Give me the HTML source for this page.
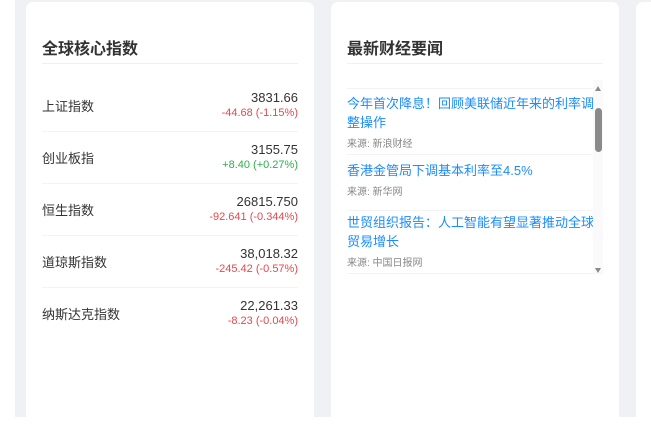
<!DOCTYPE html>
<html><head><meta charset="utf-8"><style>
*{box-sizing:border-box;margin:0;padding:0}
body{width:651px;height:417px;overflow:hidden;background:#fff;font-family:"Liberation Sans","Noto Sans CJK SC",sans-serif;position:relative}
.bg{position:absolute;left:15px;top:0;right:0;bottom:0;background:#f0f1f5}
.card{position:absolute;top:2px;height:440px;background:#fff;border-radius:7px}
.title{position:absolute;left:16px;top:33px;font-size:16px;font-weight:bold;color:#333}
.hr{position:absolute;left:16px;right:16px;top:61px;height:1px;background:#eef0f3}
.row{position:absolute;left:16px;right:16px;height:52px;border-bottom:1px solid #f2f3f5}
.row .n{position:absolute;left:0;top:16px;font-size:13px;color:#333}
.row .v{position:absolute;right:0;top:10px;font-size:13px;color:#333;text-align:right}
.row .c{position:absolute;right:0;top:27px;font-size:11px;text-align:right;white-space:nowrap}
.red{color:#e5484d}.green{color:#2bb04a}
.news{position:absolute;left:16px;top:78px;width:256px;height:195px;overflow:hidden}
.item{position:absolute;left:0;width:246px;border-bottom:1px solid #f2f3f5}
.item .t{font-size:13px;color:#1a8cff;line-height:19px;width:252px}
.item .s{font-size:10px;color:#888;margin-top:3px}
</style></head><body>
<div class="bg"></div>
<div class="card" style="left:26px;width:288px">
<div class="title">全球核心指数</div><div class="hr"></div>
<div class="row" style="top:78px"><div class="n">上证指数</div><div class="v">3831.66</div><div class="c red">-44.68 (-1.15%)</div></div>
<div class="row" style="top:130px"><div class="n">创业板指</div><div class="v">3155.75</div><div class="c green">+8.40 (+0.27%)</div></div>
<div class="row" style="top:182px"><div class="n">恒生指数</div><div class="v">26815.750</div><div class="c red">-92.641 (-0.344%)</div></div>
<div class="row" style="top:234px"><div class="n">道琼斯指数</div><div class="v">38,018.32</div><div class="c red">-245.42 (-0.57%)</div></div>
<div class="row" style="top:286px;border:none"><div class="n">纳斯达克指数</div><div class="v">22,261.33</div><div class="c red">-8.23 (-0.04%)</div></div>
</div>
<div class="card" style="left:331px;width:288px">
<div class="title">最新财经要闻</div><div class="hr"></div>
<div class="news">
<div style="position:absolute;left:0;top:8px;width:246px;height:1px;background:#f2f3f5"></div>
<div class="item" style="top:14px;height:61px"><div class="t">今年首次降息！回顾美联储近年来的利率调整操作</div><div class="s">来源: 新浪财经</div></div>
<div class="item" style="top:81px;height:50px"><div class="t">香港金管局下调基本利率至4.5%</div><div class="s">来源: 新华网</div></div>
<div class="item" style="top:132px;height:62px;padding-top:1px"><div class="t">世贸组织报告：人工智能有望显著推动全球贸易增长</div><div class="s">来源: 中国日报网</div></div>
<div style="position:absolute;left:246px;top:0;width:10px;height:195px;background:#fafafa"></div>
<div style="position:absolute;left:248px;top:6px;width:0;height:0;border-left:3.5px solid transparent;border-right:3.5px solid transparent;border-bottom:5px solid #8a8a8a"></div>
<div style="position:absolute;left:248px;top:28px;width:7px;height:44px;border-radius:4px;background:#8a8a8a"></div>
<div style="position:absolute;left:248px;top:188px;width:0;height:0;border-left:3.5px solid transparent;border-right:3.5px solid transparent;border-top:5px solid #8a8a8a"></div>
</div>
</div>
<div class="card" style="left:636px;width:40px"></div>
</body></html>
